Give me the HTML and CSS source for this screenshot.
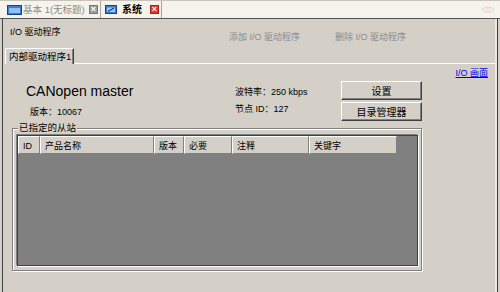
FILE: index.html
```html
<!DOCTYPE html>
<html>
<head>
  <meta charset="UTF-8" />
  <title>系统 - I/O 驱动程序</title>
  <link rel="stylesheet" href="styles.css">
</head>
<body>
  <div class="tabbar">
    <div class="doc-tab">
      <svg class="doc-icon" width="15" height="10" viewBox="0 0 15 10">
        <rect x="0.5" y="0.5" width="14" height="9" fill="#3a7bd5" stroke="#1b3f8f"/>
        <rect x="2" y="3" width="11" height="5" fill="#8ec0f2"/>
      </svg>
      <span class="doc-name dim">基本 1(无标题)</span>
      <span class="close-box">&#215;</span>
    </div>
    <div class="doc-tab active">
      <svg class="doc-icon small" width="12" height="9" viewBox="0 0 12 9">
        <rect x="0.5" y="0.5" width="11" height="8" fill="#3a7bd5" stroke="#1b3f8f"/>
        <rect x="2" y="2.5" width="8" height="4.5" fill="#9cc8f4"/>
        <path d="M3 6.5 L9 3" stroke="#1b3f8f" stroke-width="1.2"/>
      </svg>
      <span class="doc-name">系统</span>
      <span class="close-box red">&#215;</span>
    </div>
    <div class="scroll-arrows">&#9665; &#9655;</div>
  </div>

  <div class="panel">
    <div class="toolbar">
      <span class="title">I/O 驱动程序</span> <!-- section title -->
      <span class="action add">添加 I/O 驱动程序</span>
      <span class="action">删除 I/O 驱动程序</span>
    </div>

    <div class="subtabs">
      <div class="subtab">内部驱动程序1</div>
      <div class="subtab-line"></div>
    </div>

    <div class="page">
      <div class="link-row"><a href="#">I/O 画面</a></div>

      <div class="info">
        <div class="device">
          <div class="device-name">CANopen master</div>
          <div class="device-ver">版本：10067</div>
        </div>
        <div class="params">
          <div>波特率：250 kbps</div>
          <div class="node">节点 ID：127</div>
        </div>
        <div class="buttons">
          <button class="btn">设置</button>
          <button class="btn">目录管理器</button>
        </div>
      </div>

      <div class="group">
        <span class="group-title">已指定的从站</span>
        <div class="list">
          <div class="list-head">
            <div class="col c-id">ID</div>
            <div class="col c-name">产品名称</div>
            <div class="col c-ver">版本</div>
            <div class="col c-req">必要</div>
            <div class="col c-note">注释</div>
            <div class="col c-key">关键字</div>
          </div>
        </div>
      </div>
    </div>
  </div>
</body>
</html>
```

FILE: styles.css
```css
* {
  margin: 0;
  padding: 0;
  box-sizing: border-box;
}
body {
  width: 500px;
  height: 292px;
  overflow: hidden;
  background: #d4d0c8;
  font-family: "Liberation Sans", "Noto Sans CJK SC", sans-serif;
  font-size: 9px;
  line-height: 12px;
  color: #000;
  white-space: nowrap;
}
.tabbar {
  height: 19px;
  background: #f6f3eb;
  border-top: 1px solid #c8c4bc;
  border-bottom: 1px solid #555;
  display: flex;
  align-items: center;
  padding-left: 3px;
}
.doc-tab {
  height: 17px;
  display: flex;
  align-items: center;
  padding: 0 2px 0 4px;
  border-right: 1px solid #a8a59e;
}
.doc-icon {
  margin-right: 1px;
  flex: none;
}
.doc-icon.small {
  margin-right: 5px;
}
.doc-name {
  font-size: 10px;
}
.doc-name.dim {
  color: #8a8a8a;
  width: 63px;
  font-size: 9.5px;
}
.active .doc-name {
  font-weight: bold;
  width: 25px;
}
.close-box {
  width: 9px;
  height: 9px;
  margin-left: 3px;
  border: 1px solid #777;
  background: #9c9c9c;
  color: #fff;
  font-size: 9px;
  line-height: 7px;
  text-align: center;
  font-weight: bold;
}
.close-box.red {
  background: #e23a2c;
  border-color: #a52015;
}
.scroll-arrows {
  margin-left: auto;
  margin-right: 6px;
  color: #a8a8a8;
  font-size: 7px;
  letter-spacing: -1px;
}
.panel {
  margin: 0 2px;
  height: 273px;
  border-left: 1px solid #404040;
  border-right: 1px solid #404040;
  box-shadow: inset -2px 0 0 #ece9e2;
}
.toolbar {
  height: 29px;
  display: flex;
  align-items: flex-start;
  padding-left: 7px;
}
.toolbar .title {
  width: 219px;
  margin-top: 7px;
}
.toolbar .action {
  color: #8c8c8c;
  margin-top: 12px;
}
.toolbar .add {
  width: 106px;
}
.subtabs {
  height: 16px;
  display: flex;
  align-items: flex-end;
}
.subtab {
  margin-left: 2px;
  height: 16px;
  padding: 2px 0 0 3px;
  width: 69px;
  font-size: 9.5px;
  border-top: 1px solid #fff;
  border-left: 1px solid #fff;
  border-right: 1px solid #404040;
  box-shadow: inset -1px 0 0 #808080;
}
.subtab-line {
  flex: 1;
  height: 1px;
  background: #fff;
  margin-right: 2px;
}
.page {
  padding-left: 9px;
}
.link-row {
  height: 16px;
  padding: 3px 9px 0 0;
  text-align: right;
}
.link-row a {
  color: #0000ee;
}
.info {
  width: 410px;
  height: 47px;
  display: flex;
}
.device {
  width: 223px;
  padding-left: 14px;
}
.device-name {
  font-size: 14px;
  line-height: 16px;
  margin-top: 3px;
}
.device-ver {
  margin: 7px 0 0 4px;
}
.params {
  width: 106px;
  padding-top: 6px;
}
.params .node {
  margin-top: 5px;
}
.buttons {
  margin-left: auto;
  width: 81px;
  display: flex;
  flex-direction: column;
  gap: 2px;
  padding-top: 1px;
}
.btn {
  height: 19px;
  font-family: inherit;
  font-size: 10px;
  background: #d4d0c8;
  border: 1px solid;
  border-color: #fff #404040 #404040 #fff;
  box-shadow: inset -1px -1px 0 #808080;
}
.group {
  width: 410px;
  height: 143px;
  margin-top: 1px;
  border: 1px solid #808080;
  box-shadow: inset 1px 1px 0 #fff, 1px 1px 0 #fff;
  padding: 0 3px 0 4px;
}
.group-title {
  display: inline-block;
  margin: -7px 0 0 1px;
  padding: 0 1px;
  height: 12px;
  font-size: 9.5px;
  background: #d4d0c8;
  vertical-align: top;
}
.list {
  height: 131px;
  margin-top: -6px;
  width: 401px;
  background: #808080;
  border: 1px solid #404040;
  box-shadow: -1px -1px 0 #808080, 1px 1px 0 #fff;
}
.list-head {
  display: flex;
  height: 18px;
}
.col {
  height: 18px;
  padding: 3px 0 0 4px;
  background: #d4d0c8;
  border-top: 1px solid #fff;
  border-left: 1px solid #fff;
  border-right: 1px solid #808080;
  border-bottom: 1px solid #808080;
}
.c-id { width: 22px; }
.c-name { width: 114px; }
.c-ver { width: 30px; }
.c-req { width: 48px; }
.c-note { width: 77px; }
.c-key { width: 88px; }
```
